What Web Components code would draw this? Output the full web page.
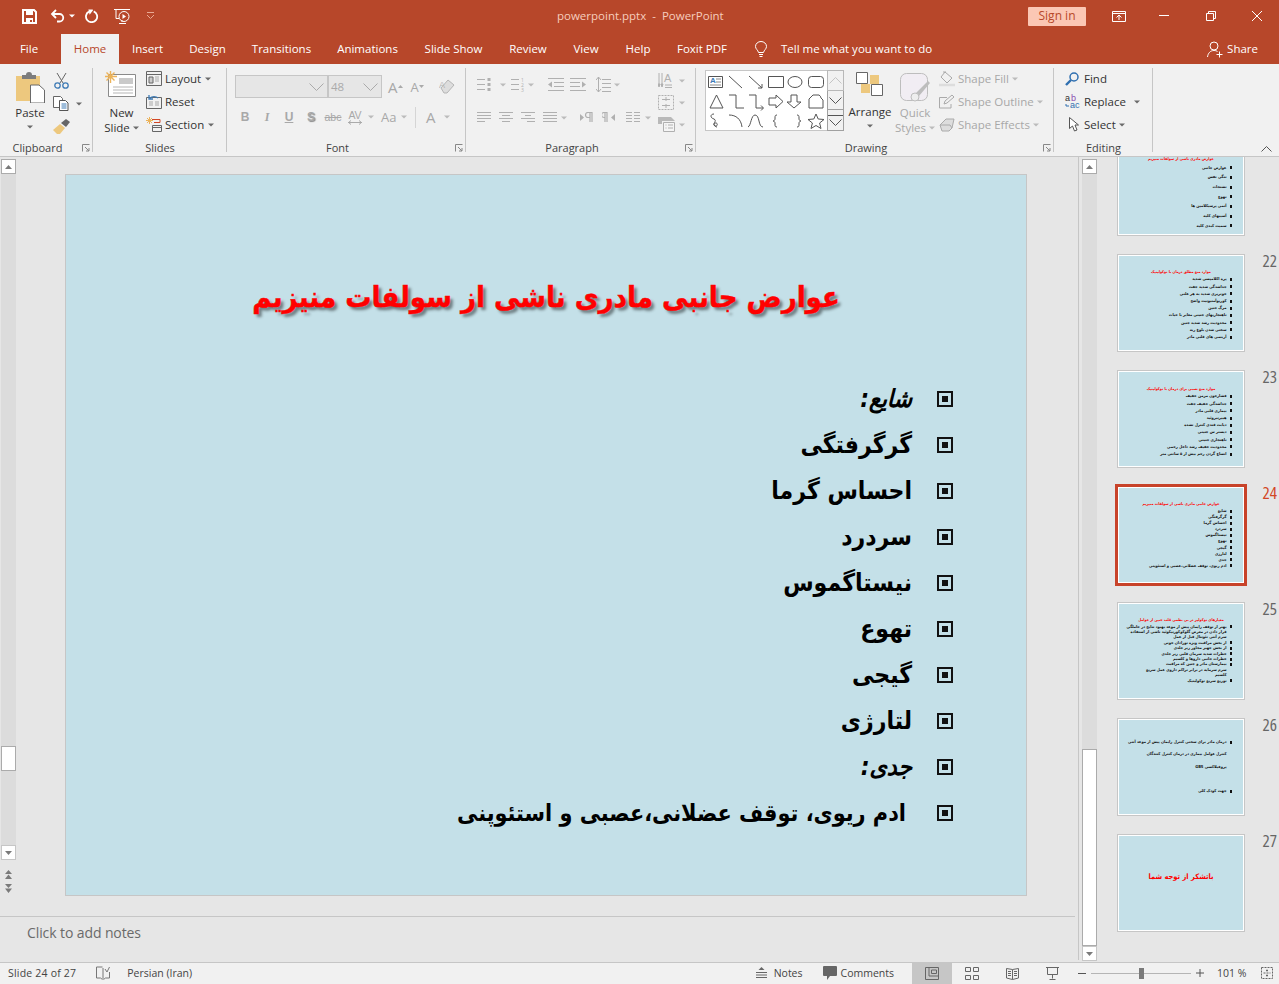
<!DOCTYPE html>
<html>
<head>
<meta charset="utf-8">
<style>
html,body{margin:0;padding:0;height:984px;overflow:hidden;background:#e6e6e6}
body{font-family:"Open Sans","Liberation Sans",sans-serif;font-size:11.5px;color:#444}
pp-app{display:flex;flex-direction:column;width:1279px;height:984px}
</style>
</head>
<body>
<pp-app>
  <pp-titlebar></pp-titlebar>
  <pp-tabs></pp-tabs>
  <pp-ribbon>
    <pp-group label="Clipboard" w="93" launcher="1"><pp-clipboard></pp-clipboard></pp-group>
    <pp-group label="Slides" w="134"><pp-slides></pp-slides></pp-group>
    <pp-group label="Font" w="239" launcher="1"><pp-font></pp-font></pp-group>
    <pp-group label="Paragraph" w="230" launcher="1"><pp-paragraph></pp-paragraph></pp-group>
    <pp-group label="Drawing" w="358" launcher="1"><pp-drawing></pp-drawing></pp-group>
    <pp-group label="Editing" w="99"><pp-editing></pp-editing></pp-group>
  </pp-ribbon>
  <pp-main></pp-main>
  <pp-status></pp-status>
</pp-app>
<script>
const caret=(c='#6a6a6a')=>`<svg width="6" height="4" viewBox="0 0 6 4"><path d="M0 .5h6L3 3.5z" fill="${c}"/></svg>`
const shared=`
  *{box-sizing:border-box}
  :host{display:block}
  svg{display:block;flex:none}
  .rw{display:flex;align-items:center;white-space:nowrap}
  .dis{color:#a8a8a8}
`
class Base extends HTMLElement{
  connectedCallback(){
    if(this.shadowRoot)return
    this.attachShadow({mode:'open'}).innerHTML=`<style>${shared}${this.css()}</style>${this.html()}`
  }
  css(){return ''}
  html(){return ''}
}

class PpTitlebar extends Base{
  css(){return `
    :host{height:32px;background:#b7472a;color:#fff}
    .bar{display:flex;align-items:center;height:32px;position:relative}
    .name{position:absolute;left:557px;top:8px;color:#f6cdbd;font-size:11.5px;line-height:16px;white-space:pre}
    .sign{margin-left:873px;width:58px;height:19px;background:#fbc7b4;border-radius:1px;color:#b7472a;font-size:12px;line-height:18px;text-align:center}
  `}
  html(){return `<div class="bar">
    <svg style="margin-left:22px" width="15" height="15" viewBox="0 0 15 15"><path d="M1 1h11l2 2v11H1z" fill="none" stroke="#fff" stroke-width="2"/><path d="M4 1h7v5H4zM4 9h7v5H4z" fill="#fff"/><path d="M8 11h2v2H8z" fill="#b7472a"/></svg>
    <svg style="margin-left:13px" width="15" height="14" viewBox="0 0 15 14"><path d="M2 5h7.5a3.7 3.7 0 0 1 0 7.5H7" fill="none" stroke="#fff" stroke-width="1.8"/><path d="M6 1L2 5l4 4" fill="none" stroke="#fff" stroke-width="1.8"/></svg>
    <span style="margin:0 0 0 4px">${caret('#fff')}</span>
    <svg style="margin-left:10px" width="14" height="14" viewBox="0 0 14 14"><path d="M8.7 2.4A5.6 5.6 0 1 1 4 2.6" fill="none" stroke="#fff" stroke-width="1.8"/><path d="M3.4.4h4.4v1.2L4.6 5.8z" fill="#fff"/></svg>
    <svg style="margin-left:15px" width="17" height="17" viewBox="0 0 17 17" fill="none" stroke="#fff"><path d="M0 1.5h16M2 1.5v9h3M8 14v-2M5 15.500h7"/><circle cx="10" cy="8.500" r="5"/><path d="M8.500 6v5l3.500-2.500z" fill="#fff" stroke="none"/></svg>
    <svg style="margin-left:15px" width="9" height="8" viewBox="0 0 9 8" fill="none" stroke="#e9a994"><path d="M1 .5h7M1 3l3.500 3.500L8 3"/></svg>
    <span class="name">powerpoint.pptx  -  PowerPoint</span>
    <span class="sign">Sign in</span>
    <svg style="margin-left:26px" width="14" height="11" viewBox="0 0 14 11" fill="none" stroke="#fff"><path d="M.5.500h13v10H.5zM.5 2.500h13M7 9V4.500M4.500 6.500L7 4l2.500 2.500"/></svg>
    <svg style="margin-left:33px" width="10" height="2" viewBox="0 0 10 2"><path d="M0 .5h10" stroke="#fff"/></svg>
    <svg style="margin-left:37px" width="10" height="10" viewBox="0 0 10 10" fill="none" stroke="#fff"><path d="M.5 2.500h7v7h-7zM2.500 2.500v-2h7v7h-2"/></svg>
    <svg style="margin-left:36px" width="10" height="10" viewBox="0 0 10 10" stroke="#fff"><path d="M0 0l10 10M10 0L0 10"/></svg>
  </div>`}
}

class PpTabs extends Base{
  css(){return `
    :host{height:32px;background:#b7472a;color:#fff}
    .bar{display:grid;grid-template-columns:2px 59px 58px 57px 63px 85px 87px 85px 64px 52px 52px 76px 27px 14px 1fr auto;height:32px;font-size:11.5px;line-height:30px;align-items:end}
    .t{text-align:center;height:30px;white-space:nowrap}
    .file{padding-right:5px}
    .on{background:#f1f1f1;color:#b7472a}
    .share{display:flex;align-items:center;gap:4px;height:30px;padding-right:21px}
    .tell{height:30px;white-space:nowrap;grid-column:15}
    .bulb{height:30px;display:flex;align-items:center;justify-content:flex-end;grid-column:13}
  `}
  html(){
    const names=['File','Home','Insert','Design','Transitions','Animations','Slide Show','Review','View','Help','Foxit PDF']
    return `<div class="bar"><span></span>${names.map(n=>`<span class="t ${n=='Home'?'on':''} ${n=='File'?'file':''}">${n}</span>`).join('')}
    <span class="bulb"><svg width="12" height="17" viewBox="0 0 12 17" fill="none" stroke="#fff"><path d="M3.500 11.500C3 9 .5 8 .5 5.500a5.500 5 0 0 1 11 0C11.500 8 9 9 8.500 11.500zM4 13.500h4M4.500 15.500h3"/></svg></span>
    <span class="tell">Tell me what you want to do</span>
    <span class="share"><svg width="16" height="17" viewBox="0 0 16 17" fill="none" stroke="#fff"><circle cx="7" cy="5" r="4"/><path d="M.5 16c.5-4 3-6.500 6.500-6.500 1.500 0 2.500.3 3.500 1M9.500 13.500h6M12.500 10.500v6"/></svg>Share</span>
    </div>`}
}

class PpRibbon extends Base{
  css(){return `:host{height:93px;background:#f1f1f1;border-bottom:1px solid #c6c6c6;position:relative}
    .r{display:flex;height:92px}
    svg{position:absolute;right:7px;bottom:4px}`}
  html(){return `<div class="r"><slot></slot></div><svg width="11" height="6" viewBox="0 0 11 6" fill="none" stroke="#555"><path d="M.5 5.500l5-5 5 5"/></svg>`}
}

class PpGroup extends Base{
  css(){return `
    :host{height:92px;position:relative;flex:none}
    .box{height:92px;display:flex;flex-direction:column;position:relative}
    .body{height:77px}
    .sep{position:absolute;right:0;top:4px;bottom:4px;width:1px;background:#c6c6c6}
    .lb{text-align:center;line-height:14px;font-size:11px;color:#444}
    .has .lb{padding-right:18px}
    .lau{position:absolute;right:3px;bottom:4px}
  `}
  html(){
    this.style.width=this.getAttribute('w')+'px'
    const has=this.hasAttribute('launcher')
    return `<div class="box ${has?'has':''}"><div class="body"><slot></slot></div><div class="lb">${this.getAttribute('label')}</div><i class="sep"></i>
    ${has?`<svg class="lau" width="8" height="8" viewBox="0 0 8 8" fill="none" stroke="#888"><path d="M.5 7.500v-7h7M3 3l4 4M7 4v3H4"/></svg>`:''}</div>`}
}

const bigCss=`
  .big{display:flex;flex-direction:column;align-items:center;font-size:11.5px;line-height:15px;color:#333}
  .big svg.ic{margin-bottom:0}
  .item{display:flex;align-items:center;height:23px;color:#333;font-size:11.5px;white-space:nowrap}
`

class PpClipboard extends Base{
  css(){return bigCss+`
    .w{display:grid;grid-template-columns:58px 30px;height:76px}
    .big{padding:8px 0 0 2px}
    .col{display:flex;flex-direction:column;padding-top:5px}
    .item{height:23px}
    .c{margin-top:5px}
  `}
  html(){return `<div class="w"><div class="big">
      <svg class="ic" width="29" height="31" viewBox="0 0 29 31"><path d="M0 4h24v25H0z" fill="#edc87e"/><path d="M6 3h4a3 3 0 0 1 6 0h4v4H6z" fill="#7c7c7c"/><path d="M14.500 13H23l5.500 5v13h-14z" fill="#fff" stroke="#6a6a6a"/></svg>
      <span style="margin-top:2px">Paste</span><span class="c">${caret()}</span></div>
    <div class="col">
      <div class="item"><svg style="margin-left:-4px" width="15" height="16" viewBox="0 0 15 16" fill="none"><path d="M3 0l6 10M12 0L6 10" stroke="#666"/><circle cx="3.500" cy="12.500" r="2.700" stroke="#3d7ab5" stroke-width="1.300"/><circle cx="11.500" cy="12.500" r="2.700" stroke="#3d7ab5" stroke-width="1.300"/></svg></div>
      <div class="item"><svg style="margin-left:-5px" width="16" height="15" viewBox="0 0 16 15" fill="#fff" stroke="#666"><path d="M.5.500h7l2 2v9h-9z"/><path d="M6.500 4.500h6l2.500 2.500v7.500h-8.500z" stroke="#555"/><path d="M8.500 8h5M8.500 10h5M8.500 12h5" stroke="#3d7ab5"/></svg><span style="margin-left:7px">${caret()}</span></div>
      <div class="item"><svg style="margin-left:-5px" width="17" height="15" viewBox="0 0 17 15"><path d="M0 11l7-6 5 4-5 6H4z" fill="#edc87e"/><path d="M8 4l5-4 4 3-4 5z" fill="#666"/></svg></div>
    </div></div>`}
}

class PpSlides extends Base{
  css(){return bigCss+`
    .w{display:grid;grid-template-columns:53px 1fr;height:76px}
    .big{padding:7px 0 0 2px}
    .col{display:flex;flex-direction:column;padding-top:3px}
    .item svg:first-child{margin-right:3px}
    .item span{margin-left:4px}
  `}
  html(){return `<div class="w"><div class="big">
      <svg class="ic" width="31" height="27" viewBox="0 0 31 27"><path d="M3.500 3.500h27v22h-27z" fill="#fff" stroke="#8a8a8a"/><path d="M14 7h14v6H14z" fill="#c9c9c9"/><path d="M8 16h20M8 19h20M8 22h20" stroke="#b5b5b5"/><path d="M5.500 0v12M0 5.500h12M1.500 1.500l8 8M9.500 1.500l-8 8" stroke="#ecb35a" stroke-width="1.400"/></svg>
      <span style="margin:7px 0 0 2px">New</span><span class="rw" style="gap:3px;margin-left:2px">Slide ${caret()}</span></div>
    <div class="col">
      <div class="item"><svg width="16" height="15" viewBox="0 0 16 15" fill="none" stroke="#666"><path d="M.5.500h15v14H.5zM.5 3.500h15"/><path d="M3 6h4v6H3z" fill="#ccc"/><path d="M9 6h4M9 8h4M9 10h4" stroke="#aaa"/></svg>Layout<span>${caret()}</span></div>
      <div class="item"><svg width="16" height="15" viewBox="0 0 16 15" fill="none"><path d="M.5 3.500h15v11H.5z" stroke="#666"/><path d="M3 7h4v5H3zM9 7h4v5H9z" fill="#ccc"/><path d="M4 4a5 3.500 0 0 1 8 0M3 1v4h4" stroke="#3d7ab5" stroke-width="1.300"/></svg>Reset</div>
      <div class="item"><svg width="16" height="15" viewBox="0 0 16 15" fill="none"><path d="M3.500 0v7M0 3.500h7M1 1l5 5M6 1L1 6" stroke="#ecb35a"/><path d="M6 2.500h8v3H8" stroke="#d24726"/><path d="M6.500 8.500h9v6h-9zM6.500 10.500h9" stroke="#666"/></svg>Section<span>${caret()}</span></div>
    </div></div>`}
}

class PpFont extends Base{
  css(){return `
    .w{padding:11px 0 0 8px;color:#a8a8a8}
    .r1,.r2{display:flex;align-items:center}
    .sel{height:23px;background:#e6e6e6;border:1px solid #c6c6c6;display:flex;align-items:center;justify-content:flex-end;padding-right:3px;font-size:11.5px;color:#aaa}
    .sel span{margin-right:auto;padding-left:2px}
    .r2{margin-top:8px;font-size:12px;height:22px;padding-left:2px}
    .g{width:22px;text-align:center;font-weight:700;font-family:"Liberation Sans",sans-serif}
    .av{display:flex;flex-direction:column;align-items:center;font-weight:400;font-size:10.5px;line-height:10px}
    .bigA{font-size:15px;font-weight:400}
  `}
  html(){const chev=`<svg width="15" height="8" viewBox="0 0 15 8" fill="none" stroke="#aaa"><path d="M.5.500l7 7 7-7"/></svg>`
    return `<div class="w"><div class="r1">
      <div class="sel" style="width:93px">${chev}</div><div class="sel" style="width:54px"><span>48</span>${chev}</div>
      <span class="bigA" style="margin-left:6px;font-size:15px">A</span><svg width="5" height="3" viewBox="0 0 5 3"><path d="M0 3l2.500-3L5 3z" fill="#aaa"/></svg>
      <span class="bigA" style="margin-left:8px;font-size:13px">A</span><svg width="5" height="3" viewBox="0 0 5 3"><path d="M0 0l2.500 3L5 0z" fill="#aaa"/></svg>
      <svg style="margin-left:15px" width="16" height="16" viewBox="0 0 16 16"><path d="M2 9l7-8 6 5-7 8H5z" fill="#ddd" stroke="#b5b5b5"/><text x="0" y="9" font-size="9" fill="#b5b5b5" font-family="Liberation Sans">A</text></svg>
    </div>
    <div class="r2">
      <span class="g" style="margin-left:-3px">B</span><span class="g" style="font-style:italic;font-family:'Liberation Serif',serif">I</span><span class="g" style="text-decoration:underline">U</span><span class="g" style="text-shadow:1px 1px 1px #888">S</span>
      <span class="g" style="font-weight:400;font-size:10.500px;text-decoration:line-through">abc</span>
      <span class="g av">AV<svg width="14" height="5" viewBox="0 0 14 5" fill="none" stroke="#aaa"><path d="M0 2.500h14M3 .5L.5 2.500 3 4.500M11 .5l2.500 2-2.500 2"/></svg></span><span style="margin-left:2px">${caret('#bbb')}</span>
      <span style="margin-left:7px;font-size:13px;width:18px">Aa</span><span style="margin-left:2px">${caret('#bbb')}</span>
      <i style="width:1px;height:21px;background:#d5d5d5;margin-left:8px"></i>
      <span style="margin-left:10px;font-size:15px;width:12px">A</span><span style="margin-left:6px">${caret('#bbb')}</span>
    </div></div>`}
}

class PpParagraph extends Base{
  css(){return `
    .w{display:grid;grid-template-columns:181px 1fr;height:76px;padding:9px 0 0 11px}
    .r1,.r2{display:flex;align-items:center;height:23px}
    .r2{margin-top:10px}
    .col{display:flex;flex-direction:column;margin-top:-2px;gap:3px}
    .u{display:flex;align-items:center;height:19px;gap:5px}
    .m{margin-left:var(--m)}
  `}
  html(){
    const g='#b0b0b0'
    const al=(a,b,c)=>`<svg width="14" height="11" viewBox="0 0 14 11" stroke="${g}"><path d="M0 .5h14M${a} 3.500h${14-2*a}M0 6.500h14M${b} 9.500h${c}"/></svg>`
    return `<div class="w"><div>
    <div class="r1">
      <svg width="14" height="15" viewBox="0 0 14 15"><path d="M0 2.500h8M0 7.500h8M0 12.500h8" stroke="${g}"/><path d="M10.500 1h3v3h-3zM10.500 6h3v3h-3zM10.500 11h3v3h-3z" fill="${g}"/></svg>
      <span class="m" style="--m:9px">${caret('#bbb')}</span>
      <svg class="m" style="--m:5px" width="14" height="15" viewBox="0 0 14 15"><path d="M0 2.500h8M0 7.500h8M0 12.500h8" stroke="${g}"/><text x="10" y="4.500" font-size="5" fill="${g}">1</text><text x="10" y="9.500" font-size="5" fill="${g}">2</text><text x="10" y="14.500" font-size="5" fill="${g}">3</text></svg>
      <span class="m" style="--m:3px">${caret('#bbb')}</span>
      <svg class="m" style="--m:14px" width="16" height="14" viewBox="0 0 16 14"><path d="M0 .5h16M6 4.500h10M6 8.500h10M0 12.500h16" stroke="${g}"/><path d="M0 6.500l4-3v6z" fill="${g}"/></svg>
      <svg class="m" style="--m:6px" width="16" height="14" viewBox="0 0 16 14"><path d="M0 .5h16M0 4.500h10M0 8.500h10M0 12.500h16" stroke="${g}"/><path d="M16 6.500l-4-3v6z" fill="${g}"/></svg>
      <svg class="m" style="--m:10px" width="15" height="17" viewBox="0 0 15 17"><path d="M6 3.500h9M6 7.500h9M6 11.500h9M6 15.500h9" stroke="${g}"/><path d="M2.500 1v15M0 4l2.500-3L5 4M0 13l2.500 3L5 13" fill="none" stroke="${g}"/></svg>
      <span class="m" style="--m:3px">${caret('#bbb')}</span>
    </div>
    <div class="r2">
      ${al(0,0,8)}<span class="m" style="--m:8px;display:block">${al(3,3,8)}</span><span class="m" style="--m:8px;display:block">${al(4,6,8)}</span><span class="m" style="--m:8px;display:block">${al(0,0,14)}</span>
      <span class="m" style="--m:4px">${caret('#bbb')}</span>
      <svg class="m" style="--m:13px" width="13" height="11" viewBox="0 0 13 11"><path d="M0 2l4 3.500L0 9z" fill="${g}"/><path d="M10 0v10M12 0v10M12 .5H8a2.500 2.500 0 0 0 0 5h2" fill="none" stroke="${g}" stroke-width="1.200"/></svg>
      <svg class="m" style="--m:9px" width="13" height="11" viewBox="0 0 13 11"><path d="M13 2L9 5.500l4 3.500z" fill="${g}"/><path d="M3 0v10M5 0v10M5 .5H2a2.500 2.500 0 0 0 0 5h1" fill="none" stroke="${g}" stroke-width="1.200"/></svg>
      <svg class="m" style="--m:11px" width="14" height="11" viewBox="0 0 14 11"><path d="M0 .5h6M8 .5h6M0 3.500h6M8 3.500h6M0 6.500h6M8 6.500h6M0 9.500h6M8 9.500h6" stroke="${g}"/></svg>
      <span class="m" style="--m:5px">${caret('#bbb')}</span>
    </div></div>
    <div class="col">
      <div class="u"><svg width="15" height="18" viewBox="0 0 15 18"><path d="M1 1v13M4 1v13M0 12l1 3 1-3zM3 12l1 3 1-3z" stroke="${g}" fill="${g}"/><text x="6" y="10" font-size="11" fill="${g}" font-family="Liberation Sans">A</text><path d="M7 13h7M7 15.500h7" stroke="${g}"/></svg><span class="m" style="--m:1px">${caret('#bbb')}</span></div>
      <div class="u"><svg width="16" height="15" viewBox="0 0 16 15" fill="none" stroke="${g}" stroke-dasharray="2 1"><path d="M.5.500h15v14H.5z"/><path d="M4 4.500h8M4 10.500h8M8 2v4M8 9v4" stroke-dasharray="none"/></svg><span class="m" style="--m:0">${caret('#bbb')}</span></div>
      <div class="u"><svg width="17" height="15" viewBox="0 0 17 15"><path d="M0 0h13l4 4H4v3H0z" fill="#b9b9b9"/><path d="M5.500 5.500h11v9h-11z" fill="#f5f5f5" stroke="${g}"/><path d="M7.500 8h1M7.500 11h1M10 8h5M10 11h5" stroke="${g}"/></svg><span class="m" style="--m:-1px">${caret('#bbb')}</span></div>
    </div></div>`}
}

class PpDrawing extends Base{
  css(){return bigCss+`
    .w{display:flex;height:76px;padding:6px 0 0 9px}
    .gal{width:122px;height:61px;background:#fff;border:1px solid #c6c6c6;border-right:0}
    .sb{width:17px;height:61px;display:grid;grid-template-rows:21px 19px 21px}
    .sb div{border:1px solid #b8b8b8;background:#f1f1f1;display:flex;align-items:center;justify-content:center;flex-direction:column;gap:3px}
    .sb div+div{border-top:0}
    .big{position:relative}
    .ar{margin-left:6px;width:40px;padding-top:2px}
    .qs{margin-left:0;width:50px;padding-top:3px;color:#a8a8a8}
    .col{margin-left:-1px;display:flex;flex-direction:column;margin-top:-3px}
    .item{color:#a8a8a8;gap:3px}
  `}
  html(){
    const s='#555'
    return `<div class="w"><div class="gal"><svg width="120" height="59" viewBox="0 0 120 59" fill="none" stroke="${s}" style="margin:0">
      <path d="M2.500 5.500h14v11h-14z"/><text x="4" y="12" font-size="8" font-weight="700" fill="#3d7ab5" stroke="none" font-family="Liberation Sans">A</text><path d="M10 8h5M10 11h5M4 14h11" stroke="#888"/>
      <path d="M23 5l13 12M43 5l13 12M56 17v-4M56 17h-4"/>
      <path d="M62.500 5.500h15v11h-15z"/><ellipse cx="89" cy="11" rx="7" ry="5.500"/><rect x="102.500" y="5.500" width="15" height="11" rx="3"/>
      <path d="M4 37l6.500-13L17 37z"/><path d="M23 24h7v13h8M43 24h7v13h7M55 34.500l2.500 2.500-2.500 2.500"/>
      <path d="M63 27h7v-3l7 6.500-7 6.500v-3h-7zM85 24h6v7h4l-7 6-7-6h4z"/>
      <path d="M103 37V28l4-4h6a4 4 0 0 1 2 3l2 2v8z"/>
      <path d="M8 43c-4 0-4 4 0 5 4 2-3 5 1 7 3 1 3-4 0-3-2 1 0 4 2 4"/><path d="M23 44c7 0 12 4 13 12M42 56c3-1 3-12 7-12 5 0 3 12 8 12"/>
      <path d="M71 44c-2 0-2 1-2 3v1c0 1-1 2-2 2 1 0 2 1 2 2v1c0 2 0 3 2 3M91 44c2 0 2 1 2 3v1c0 1 1 2 2 2-1 0-2 1-2 2v1c0 2 0 3-2 3"/>
      <path d="M110 43l2.200 5 5.800.5-4.400 3.500 1.400 5.500-5-3-5 3 1.400-5.500-4.400-3.500 5.800-.5z"/>
    </svg></div>
    <div class="sb">
      <div><svg width="13" height="7" viewBox="0 0 13 7" fill="none" stroke="#c4c4c4"><path d="M.5 6.500l6-6 6 6"/></svg></div>
      <div style="border-color:#a0a0a0"><svg width="13" height="7" viewBox="0 0 13 7" fill="none" stroke="#555"><path d="M.5.500l6 6 6-6"/></svg></div>
      <div style="border-color:#a0a0a0"><svg width="15" height="1" viewBox="0 0 15 1"><path d="M0 .5h15" stroke="#555"/></svg><svg width="13" height="7" viewBox="0 0 13 7" fill="none" stroke="#555"><path d="M.5.500l6 6 6-6"/></svg></div>
    </div>
    <div class="big ar"><svg width="28" height="24" viewBox="0 0 28 24"><path d="M12 4h9v9h-9zM3 13h9v9H3z" fill="#edc87e" transform="translate(2 -1)"/><path d="M.5.500h11v11H.5z" fill="#fff" stroke="#666"/><path d="M15.500 12.500h11v11h-11z" fill="#fff" stroke="#666"/></svg>
      <span style="margin-top:8px">Arrange</span><span style="margin-top:5px">${caret()}</span></div>
    <div class="big qs"><svg width="30" height="30" viewBox="0 0 30 30"><rect x=".5" y=".5" width="27" height="27" rx="6" fill="#f1edf3" stroke="#bdbdbd"/><path d="M16 20L28 8l2 2-11 13z" fill="#bdbdbd"/><circle cx="15" cy="24" r="4" fill="#eee" stroke="#bdbdbd"/></svg>
      <span style="margin-top:2px">Quick</span><span class="rw" style="gap:3px">Styles ${caret('#bbb')}</span></div>
    <div class="col">
      <div class="item"><svg width="16" height="16" viewBox="0 0 16 16" fill="none" stroke="#aaa"><path d="M6 1l7 6-5 5-6-6zM4 1h3"/><path d="M0 14h16" stroke="#ddd" stroke-width="2.500"/></svg>Shape Fill ${caret('#bbb')}</div>
      <div class="item"><svg width="16" height="15" viewBox="0 0 16 15" fill="none" stroke="#aaa"><path d="M12 10v4H.5V3.500H8"/><path d="M5 10l1-3 7-6 2 2-7 6z"/></svg>Shape Outline ${caret('#bbb')}</div>
      <div class="item"><svg width="16" height="14" viewBox="0 0 16 14"><path d="M1 7l6-6h8l-2 9-3 3H3z" fill="#ddd" stroke="#aaa"/><path d="M1 7h10l2 3" fill="none" stroke="#aaa"/></svg>Shape Effects ${caret('#bbb')}</div>
    </div></div>`}
}

class PpEditing extends Base{
  css(){return bigCss+`
    .w{padding:3px 0 0 11px}
    .ic{width:19px;flex:none;display:flex;justify-content:flex-start}
  `}
  html(){return `<div class="w">
    <div class="item"><span class="ic"><svg width="14" height="14" viewBox="0 0 14 14" fill="none" stroke="#2f6fb0"><circle cx="9" cy="5" r="4" stroke-width="1.500"/><path d="M6 8l-5 5" stroke-width="2.400"/></svg></span>Find</div>
    <div class="item"><span class="ic"><svg width="16" height="18" viewBox="0 0 16 18"><text x="0" y="8" font-size="9" fill="#333" font-family="Liberation Sans">a</text><text x="6" y="8" font-size="9" fill="#8a4db0" font-family="Liberation Sans">b</text><text x="5" y="15" font-size="9" fill="#2f6fb0" font-family="Liberation Sans">ac</text><path d="M1 13h3M1 11v2" stroke="#2f6fb0" fill="none"/></svg></span>Replace<span style="margin-left:8px">${caret()}</span></div>
    <div class="item"><span class="ic"><svg style="margin-left:4px" width="10" height="15" viewBox="0 0 10 15"><path d="M.5.500v11l3-2.500 2 5 2.500-1-2-5h3.500z" fill="#fff" stroke="#555"/></svg></span>Select<span style="margin-left:3px">${caret()}</span></div>
  </div>`}
}

class PpScroll extends Base{
  css(){return `
    :host{width:15px;display:flex;flex-direction:column;flex:none;background:#dcdcdc}
    .btn{height:15px;background:#fff;border:1px solid #ababab;display:flex;align-items:center;justify-content:center;flex:none}
    .low{border-color:#c6c6c6}
    .gap{flex:none}
    .th{background:#fff;border:1px solid #ababab;flex:none}
  `}
  html(){const a=+this.getAttribute('before'),b=+this.getAttribute('thumb'),c=+this.getAttribute('after')
    return `<div class="btn"><svg width="7" height="4" viewBox="0 0 7 4"><path d="M0 4l3.500-4L7 4z" fill="#7a7a7a"/></svg></div>
    <div class="gap" style="height:${a}px"></div><div class="th" style="height:${b}px"></div><div class="gap" style="height:${c}px"></div>
    <div class="btn low"><svg width="7" height="4" viewBox="0 0 7 4"><path d="M0 0l3.500 4L7 0z" fill="#7a7a7a"/></svg></div>`}
}

class PpBullet extends Base{
  css(){return `:host{width:16px;height:16px;border:2px solid #111;background:#c4e0e8;padding:3px;flex:none}
    i{display:block;width:6px;height:6px;background:#111}`}
  html(){return '<i></i>'}
}

class PpSlide extends Base{
  css(){return `
    :host{width:962px;height:722px;background:#c4e0e8;border:1px solid #c6c6c6;flex:none;direction:rtl;font-family:"DejaVu Sans Condensed","DejaVu Sans",sans-serif;font-stretch:condensed;color:#000}
    h1{margin:0;padding-top:92px;height:201px;text-align:center;color:#f00;font-size:29px;font-weight:700;line-height:60px;text-shadow:3px 3px 3px rgba(0,0,0,.45);-webkit-text-stroke:.4px #f00;white-space:nowrap}
    ul{margin:0;padding:0 73px 0 0;list-style:none;display:grid;grid-auto-rows:46px}
    li{display:flex;align-items:center;font-size:24.5px;font-weight:700;line-height:46px;white-space:nowrap}
    .t{margin-right:25px}
    .i{font-style:italic}
    .o{margin-right:31px;font-size:23.200px}
  `}
  html(){
    const rows=[['شایع:','i'],['گرگرفتگی',''],['احساس گرما',''],['سردرد',''],['نیستاگموس',''],['تهوع',''],['گیجی',''],['لتارژی',''],['جدی:','i'],['ادم ریوی، توقف عضلانی،عصبی و استئوپنی','o']]
    return `<h1>عوارض جانبی مادری ناشی از سولفات منیزیم</h1><ul>${rows.map(r=>`<li><pp-bullet></pp-bullet><span class="t ${r[1]}">${r[0]}</span></li>`).join('')}</ul>`}
}

class PpThumb extends Base{
  css(){return `
    :host{display:grid;grid-template-columns:128px 1fr;height:116px;padding-left:20px;flex:none;font-family:"DejaVu Sans Condensed","DejaVu Sans",sans-serif;font-stretch:condensed}
    .f{width:128px;height:98px;border:1px solid #c6c6c6;background:#fff;padding:1px;position:relative}
    :host([sel]) .f{outline:3px solid #c8432a;outline-offset:-1px;border-color:#fff;background:#fff;height:98px}
    .s{height:94px;background:#c4e0e8;direction:rtl;padding:var(--pad) 11px 0 8px;overflow:hidden;color:#111}
    .h{color:#f00;font-weight:700;font-size:var(--hs);text-align:center;line-height:9px;white-space:nowrap;margin-right:-3px}
    .ro{display:flex;align-items:center;height:var(--pi);font-size:4px;line-height:4.2px;font-weight:700;white-space:nowrap;gap:3px}
    .ro i{width:2.500px;height:3px;background:#111;flex:none}
    .ro.c{padding-right:5.500px}
    .n{font-family:"Open Sans",sans-serif;font-size:17px;line-height:14px;color:#666;text-align:right;padding-right:2px}
    :host([sel]) .n{color:#d24726}
  `}
  html(){
    const rows=(this.getAttribute('rows')||'').split('|').filter(Boolean)
    const head=this.getAttribute('head')
    return `<div class="f" style="--pad:${this.getAttribute('pad')}px;--pi:${this.getAttribute('pi')||7}px;--hs:${this.getAttribute('hs')||'3.8px'}"><div class="s">${head?`<div class="h">${head}</div>`:''}${rows.map(r=>r[0]=='~'?`<div class="ro c">${r.slice(1)}</div>`:`<div class="ro"><i></i><span>${r}</span></div>`).join('')}</div></div><div class="n">${this.getAttribute('n')}</div>`}
}

class PpMain extends Base{
  css(){return `
    :host{height:805px;display:flex;background:#e6e6e6}
    .left{width:1076px;display:flex;flex-direction:column;flex:none}
    .ed{height:760px;display:flex;border-bottom:1px solid #c6c6c6;width:1075px}
    .sc{margin:2px 0 0 1px;display:flex;flex-direction:column}
    .sld{margin:17px 0 0 49px}
    .notes{height:45px;padding:6px 0 0 27px;color:#6a6a6a;font-size:14px;line-height:20px;letter-spacing:-.1px}
    .vl{width:1px;height:803px;background:#c6c6c6;margin-left:2px;flex:none}
    .ps{margin:2px 0 0 3px;height:801px}
    .list{flex:1;overflow:hidden;display:flex;flex-direction:column;margin-top:-19px}
    .wrap{flex:1;overflow:hidden}
    pp-scroll{height:801px}
    .two{height:43px;width:15px;display:flex;flex-direction:column;align-items:center;gap:5px;padding-top:10px}
  `}
  html(){return `<div class="left"><div class="ed">
      <div class="sc"><pp-scroll before="572" thumb="25" after="74" style="height:701px"></pp-scroll>
      <div class="two"><svg width="7" height="9" viewBox="0 0 7 9"><path d="M3.500 0L7 4H0zM3.500 4.500L7 9H0z" fill="#7a7a7a"/></svg><svg width="7" height="9" viewBox="0 0 7 9"><path d="M0 0h7L3.500 4zM0 4.500h7L3.500 9z" fill="#7a7a7a"/></svg></div></div>
      <div class="sld"><pp-slide></pp-slide></div>
    </div><div class="notes">Click to add notes</div></div>
    <i class="vl"></i>
    <div class="ps"><pp-scroll before="575" thumb="197" after="0"></pp-scroll></div>
    <div class="wrap"><div class="list">
      <pp-thumb n="" pad="14" pi="9.700" head="عوارض مادری ناشی از سولفات منیزیم" rows="عوارض جانبی|تنگی نفس|تشنجات|تهوع|آنمی پرسیکلامین ها|آسیبهای کلیه|سمیت کبدی کلیه"></pp-thumb>
      <pp-thumb n="22" pad="11" pi="7.200" head="موارد منع مطلق درمان با توکولیتیک" rows="پره اکلامپسی شدید|جداشدگی شدید جفت|خونریزی شدید به هر علتی|کوریوآمنیونیت واضح|مرگ جنین|ناهنجاریهای جنینی مغایر با حیات|محدودیت رشد شدید جنین|سختی شدن بلوغ ریه|آریتمی های قلبی مادر"></pp-thumb>
      <pp-thumb n="23" pad="12" pi="7.200" head="موارد منع نسبی برای درمان با توکولیتیک" rows="فشارخون مزمن خفیف|جداشدگی خفیف جفت|بیماری قلبی مادر|هیپرتیروئید|دیابت قندی کنترل نشده|دیستر س جنینی|ناهنجاری جنینی|محدودیت خفیف رشد داخل رحمی|اتساع گردن رحم بیش از ۵ سانتی متر"></pp-thumb>
      <pp-thumb sel n="24" pad="11" pi="6.100" head="عوارض جانبی مادری ناشی از سولفات منیزیم" rows="شایع|گرگرفتگی|احساس گرما|سردرد|نیستاگموس|تهوع|گیجی|لتارژی|جدی|ادم ریوی، توقف عضلانی،عصبی و استئوپنی"></pp-thumb>
      <pp-thumb n="25" pad="11" pi="5.400" head="معیارهای توکولیز در بی نظمی قلب جنین از عوامل" rows="بهتر از توقف زایمان پیش از موعد بهبود نتایج در حاملگی|~قرار دادن در معرض گلوکوکورتیکوئید ناشی از استفاده|~سرم آنتی نئونتال قبل از عمل|از بخش مراقبت ویژه نوزادان خونی|از بخش جهیز مجاور زیر جلدی|خطرات شدید سرمان قلبی زیر جلدی|خطرات جانبی داروها و کلسیم|بیمارستان مادر و جنین که مراقبت|~سرم سرمایه در برابر تراکم داروی عمل سریع|~کلسیم|توزیع سریع توکولیتیک"></pp-thumb>
      <pp-thumb n="26" pad="16" pi="12.300" rows="درمان مادر برای سختی کنترل زایمان پیش از موعد آنتی|~کنترل عوامل بیماری در درمان کنترل کنندگان|~پروفیلاکسی GBS|~&nbsp;|جهت کودک کلی"></pp-thumb>
      <pp-thumb n="27" pad="36" hs="7.500px" head="باتشکر از توجه شما"></pp-thumb>
    </div></div>`}
}

class PpStatus extends Base{
  css(){return `
    :host{height:22px;background:#f1f1f1;border-top:1px solid #c6c6c6;font-size:10.500px;color:#444}
    .b{display:flex;align-items:center;height:21px;padding:0 0 1px 8px;white-space:nowrap}
    .sp{flex:1}
    .view{width:40px;height:21px;background:#c6c6c6;display:flex;align-items:center;justify-content:center;margin:0 0 -1px 18px;flex:none}
    .plain{width:40px;display:flex;justify-content:center;flex:none}
    .track{width:100px;height:1px;background:#b5b5b5;margin:0 5px 0 5px;position:relative}
    .track i{position:absolute;left:48px;top:-5px;width:5px;height:11px;background:#7a7a7a}
  `}
  html(){return `<div class="b">
    <span style="letter-spacing:.2px">Slide 24 of 27</span>
    <svg style="margin-left:20px" width="14" height="14" viewBox="0 0 14 14" fill="none" stroke="#777"><path d="M6.500 1H.5v11h4l2 1.500M7.500 13.500l2-1.500h4V6M7 2v11M9 3l2 3 2.500-5"/></svg>
    <span style="margin-left:17px">Persian (Iran)</span>
    <span class="sp"></span>
    <svg width="11" height="12" viewBox="0 0 11 12"><path d="M5.500 0l3 3h-6z" fill="#666"/><path d="M0 5.500h11M0 8h11M0 10.500h11" stroke="#666"/></svg>
    <span style="margin-left:7px">Notes</span>
    <svg style="margin-left:20px" width="14" height="14" viewBox="0 0 14 14"><path d="M1 0h12a1 1 0 0 1 1 1v8a1 1 0 0 1-1 1H7l-3 4v-4H1a1 1 0 0 1-1-1V1a1 1 0 0 1 1-1z" fill="#666"/></svg>
    <span style="margin-left:4px">Comments</span>
    <span class="view"><svg width="14" height="13" viewBox="0 0 14 13" fill="none" stroke="#666"><path d="M.5.500h13v12H.5zM4 .5v8.500h9.500M6.500 3h5v3.500h-5z"/></svg></span>
    <span class="plain"><svg width="14" height="13" viewBox="0 0 14 13" fill="none" stroke="#666"><path d="M.5.500h5v4h-5zM8.500.500h5v4h-5zM.5 8.500h5v4h-5zM8.500 8.500h5v4h-5z"/></svg></span>
    <span class="plain"><svg width="13" height="13" viewBox="0 0 13 13" fill="none" stroke="#666"><path d="M.5 1.500l6 1 6-1v9.500l-6 1.500-6-1.500zM6.500 2.500v10M2 4.500h3M2 6.500h3M2 8.500h3M8 4.500h3M8 6.500h3M8 8.500h3"/></svg></span>
    <span class="plain"><svg width="13" height="13" viewBox="0 0 13 13" fill="none" stroke="#666"><path d="M0 .5h13M1.500 .5v7h10v-7M6.500 7.500v4M3.500 12.500h6"/></svg></span>
    <svg style="margin-left:6px" width="8" height="1" viewBox="0 0 8 1"><path d="M0 .5h8" stroke="#555"/></svg>
    <span class="track"><i></i></span>
    <svg width="8" height="8" viewBox="0 0 8 8"><path d="M0 4h8M4 0v8" stroke="#555"/></svg>
    <span style="margin-left:13px;width:44px">101 %</span>
    <svg width="12" height="12" viewBox="0 0 12 12" fill="none" stroke="#666"><path d="M.5.500h11v11H.5zM6 2.500v2M5 3.500h2M6 7.500v2M5 8.500h2M2.500 6h7" stroke-dasharray="2 1"/></svg>
    <span style="width:6px"></span>
  </div>`}
}

customElements.define('pp-titlebar',PpTitlebar)
customElements.define('pp-tabs',PpTabs)
customElements.define('pp-ribbon',PpRibbon)
customElements.define('pp-group',PpGroup)
customElements.define('pp-clipboard',PpClipboard)
customElements.define('pp-slides',PpSlides)
customElements.define('pp-font',PpFont)
customElements.define('pp-paragraph',PpParagraph)
customElements.define('pp-drawing',PpDrawing)
customElements.define('pp-editing',PpEditing)
customElements.define('pp-scroll',PpScroll)
customElements.define('pp-bullet',PpBullet)
customElements.define('pp-slide',PpSlide)
customElements.define('pp-thumb',PpThumb)
customElements.define('pp-main',PpMain)
customElements.define('pp-status',PpStatus)
</script>
</body>
</html>
